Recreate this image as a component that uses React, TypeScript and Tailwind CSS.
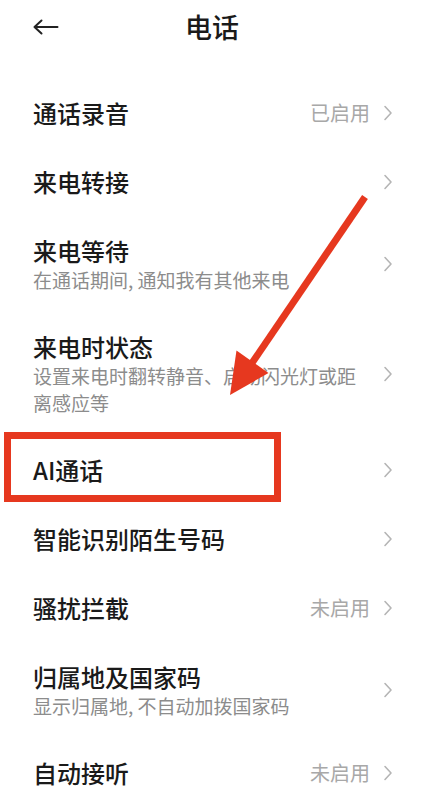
import React from "react";

type Row = {
  title: string;
  sub?: string[];
  value?: string;
};

const ROWS: Row[] = [
  { title: "通话录音", value: "已启用" },
  { title: "来电转接" },
  { title: "来电等待", sub: ["在通话期间, 通知我有其他来电"] },
  { title: "来电时状态", sub: ["设置来电时翻转静音、启动闪光灯或距", "离感应等"] },
  { title: "AI通话" },
  { title: "智能识别陌生号码" },
  { title: "骚扰拦截", value: "未启用" },
  { title: "归属地及国家码", sub: ["显示归属地, 不自动加拨国家码"] },
  { title: "自动接听", value: "未启用" },
];

const font = "font-['Noto_Sans_CJK_SC','Noto_Sans',sans-serif]";

function Chevron() {
  return (
    <svg width="10" height="16" viewBox="0 0 10 16" className="shrink-0">
      <path d="M2 1.5 L8 8 L2 14.5" fill="none" stroke="#b5b5b5" strokeWidth="1.6" strokeLinecap="round" strokeLinejoin="round" />
    </svg>
  );
}

function SettingRow({ row }: { row: Row }) {
  return (
    <div className="flex items-center pl-[33px] pr-[31px] py-[19px]">
      <div className="flex-1 min-w-0">
        <div className="text-[24px] leading-[31px] font-medium text-[#1a1a1a]">{row.title}</div>
        {row.sub &&
          row.sub.map((s, i) => (
            <div key={i} className="text-[19px] leading-[27px] text-[#8c8c8c]">
              {s}
            </div>
          ))}
      </div>
      {row.value && <span className="text-[20px] text-[#a8a8a8] mr-[13px]">{row.value}</span>}
      <Chevron />
    </div>
  );
}

export default function App() {
  return (
    <div className={`relative w-[424px] h-[800px] overflow-hidden bg-white ${font}`}>
      {/* header */}
      <div className="relative flex items-center h-[54px]">
        <svg width="26" height="16" viewBox="0 0 26 16" className="ml-[33px]">
          <path d="M1.5 8 H24.5 M8.5 1.5 L1.5 8 L8.5 14.5" fill="none" stroke="#222" strokeWidth="2" strokeLinecap="round" strokeLinejoin="round" />
        </svg>
        <div className="absolute inset-x-0 text-center text-[27px] font-medium text-[#1a1a1a] leading-[54px]">电话</div>
      </div>

      <div className="pt-[24px]">
        {ROWS.map((r) => (
          <SettingRow key={r.title} row={r} />
        ))}
      </div>

      {/* red annotation box */}
      <div className="absolute left-[4px] top-[432px] w-[277px] h-[70px] border-[7px] border-[#e6381f] pointer-events-none" />

      {/* red arrow */}
      <svg className="absolute inset-0 pointer-events-none" width="424" height="800" viewBox="0 0 424 800">
        <line x1="365" y1="197" x2="250" y2="366" stroke="#e6381f" strokeWidth="7" />
        <polygon points="230,395 236.5,350.5 268.5,373" fill="#e6381f" />
      </svg>
    </div>
  );
}
